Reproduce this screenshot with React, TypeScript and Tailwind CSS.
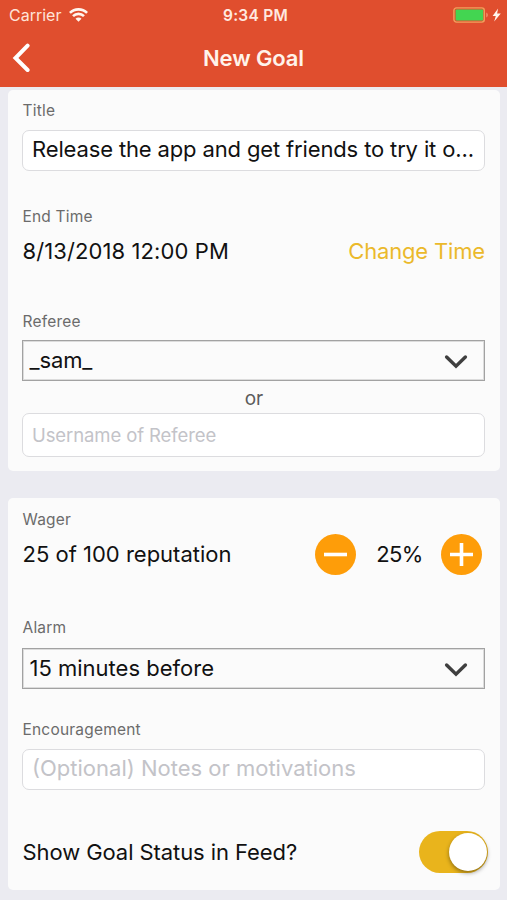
import { useState, type ReactNode } from "react"

const Label = ({ children }: { children: ReactNode }) => (
  <div className="h-5 pl-[0.5px] text-[15.5px] leading-5 tracking-[0.2px] text-[#6b6b6b]">{children}</div>
)

const Select = ({ children }: { children: ReactNode }) => (
  <button type="button" className="flex h-[41px] w-full items-center justify-between border border-[#a2a2a2] bg-[#fbfbfb] pl-[6.5px] pr-[16px] text-left shadow-[inset_0_0_0_1px_#dcdcdc]">
    {children}
    <svg className="mt-[2px]" width="24" height="16" viewBox="0 0 24 16" fill="none" stroke="#3f3f3f" strokeWidth="3.4" strokeLinecap="round">
      <path d="M2.6 3 12 12.2 21.4 3" />
    </svg>
  </button>
)

const WagerButton = ({ plus, onClick }: { plus?: boolean; onClick: () => void }) => (
  <button type="button" onClick={onClick} className="h-[41px] w-[41px]">
    <svg width="41" height="41" viewBox="0 0 41 41">
      <circle cx="20.5" cy="20.5" r="20.5" fill="#fe9d09" />
      <path d={plus ? "M9 20.5H32M20.5 9V32" : "M9 20.5H32"} stroke="#fff" strokeWidth="3.6" />
    </svg>
  </button>
)

const StatusBar = () => (
  <div className="flex h-[30px] items-center">
    <div className="flex w-[200px] items-center pl-[9px]">
      <span className="text-[16px] leading-5 text-[#ffe3d8]">Carrier</span>
      <svg className="ml-[8px]" width="19" height="14" viewBox="0 0 19 14" fill="none" stroke="#fff5ee" strokeWidth="2.6">
        <path d="M.9 4.9a12.2 12.2 0 0 1 17.2 0" />
        <path d="M4 8.1a7.8 7.8 0 0 1 11 0" />
        <path d="M9.5 13.7 6.5 10.7a4.2 4.2 0 0 1 6 0z" fill="#fff5ee" stroke="none" />
      </svg>
    </div>
    <span className="flex-1 pl-[4px] pt-px text-center text-[15.5px] font-semibold leading-5 tracking-[0.25px] text-[#ffe9e0]">9:34 PM</span>
    <div className="flex w-[200px] items-center justify-end pr-[6px]">
      <svg width="48" height="16" viewBox="0 0 48 16">
        <rect x=".9" y=".9" width="30.4" height="14.2" rx="2.5" fill="none" stroke="#f0a05c" strokeWidth="1.4" />
        <rect x="2.6" y="2.6" width="27.6" height="10.8" rx="1" fill="#43d551" />
        <path d="M33.3 5.5c2 1 2 4 0 5z" fill="#f09a70" />
        <path d="M45.1 1.4 39.6 9h3.2L41.2 14.4 47.8 6.6h-3.7z" fill="#fff5ee" />
      </svg>
    </div>
  </div>
)

export default function App() {
  const [wager, setWager] = useState(25)
  const [showInFeed, setShowInFeed] = useState(true)

  return (
    <div className="h-[900px] w-[507px] overflow-hidden bg-[#ebebf1] font-['Inter','Liberation_Sans',sans-serif] text-[22px] leading-7 text-[#111]">
      <header className="h-[87px] bg-[#e04e2e]">
        <StatusBar />
        <div className="flex h-[56px] items-center">
          <button type="button" className="w-[100px] pl-[12px]">
            <svg width="20" height="30" viewBox="0 0 20 30" fill="none" stroke="#fff" strokeWidth="4" strokeLinecap="round">
              <path d="M15.6 2.6 3.5 15 15.6 27" />
            </svg>
          </button>
          <h1 className="flex-1 text-center text-[22px] font-semibold tracking-[-0.1px] text-[#fff3ea]">New Goal</h1>
          <div className="w-[100px]" />
        </div>
      </header>

      <main className="flex flex-col gap-[27px] px-2 pt-[3px]">
        {/* Goal details */}
        <section className="h-[381px] w-[492px] rounded-[5px] bg-[#fbfbfb] pl-[14px] pr-[15px] pt-[11px]">
          <Label>Title</Label>
          <div className="mt-[9px] flex h-[41px] items-center rounded-[7px] border border-[#dcdcdf] bg-white px-[9px]">
            <span className="-mt-[3px] whitespace-nowrap tracking-[-0.14px]">Release the app and get friends to try it o...</span>
          </div>
          <div className="mt-[36px]">
            <Label>End Time</Label>
          </div>
          <div className="mt-[9px] flex items-center justify-between">
            <span className="pl-[0.5px] tracking-[0.1px]">8/13/2018 12:00 PM</span>
            <button type="button" className="pt-px tracking-[-0.17px] text-[#ebb92b]">Change Time</button>
          </div>
          <div className="mt-[47px]">
            <Label>Referee</Label>
          </div>
          <div className="mt-[8px]">
            <Select>
              <span className="-mt-[2px] tracking-[-0.1px]">_sam_</span>
            </Select>
          </div>
          <div className="h-[32px] pl-px text-center text-[19px] leading-[35px] text-[#5c5c5c]">or</div>
          <input
            placeholder="Username of Referee"
            className="block h-[44px] w-full rounded-[7px] border border-[#dcdcdf] bg-white px-[9px] pb-px text-[18.5px] tracking-[-0.1px] outline-none placeholder:text-[#c3c3c8]"
          />
        </section>

        {/* Wager and reminders */}
        <section className="h-[392px] w-[492px] rounded-[5px] bg-[#fbfbfb] pl-[14px] pr-[15px] pt-[12px]">
          <Label>Wager</Label>
          <div className="mt-[4px] flex h-[41px] items-center">
            <span className="flex-1 pb-[2px] pl-[0.5px]">{wager} of 100 reputation</span>
            <WagerButton onClick={() => setWager(Math.max(0, wager - 5))} />
            <span className="w-[85px] pb-[2px] pl-[2px] text-center tracking-[-0.6px]">{wager}%</span>
            <WagerButton plus onClick={() => setWager(Math.min(100, wager + 5))} />
            <div className="w-[3px]" />
          </div>
          <div className="mt-[43px]">
            <Label>Alarm</Label>
          </div>
          <div className="mt-[10px]">
            <Select>
              <span className="-mt-[2px]">15 minutes before</span>
            </Select>
          </div>
          <div className="mt-[31px]">
            <Label>Encouragement</Label>
          </div>
          <input
            placeholder="(Optional) Notes or motivations"
            className="mt-[9px] block h-[41px] w-full rounded-[7px] border border-[#dcdcdf] bg-white px-[9px] pb-[3px] outline-none placeholder:text-[#c3c3c8]"
          />
          <div className="-mr-[3px] mt-[41px] flex h-[42px] items-center justify-between">
            <span className="pl-[0.5px] tracking-[-0.08px]">Show Goal Status in Feed?</span>
            <button
              type="button"
              role="switch"
              aria-checked={showInFeed}
              onClick={() => setShowInFeed(!showInFeed)}
              className={`flex h-[42px] w-[69px] items-center rounded-full px-[1.5px] ${showInFeed ? "justify-end bg-[#e9b41c]" : "justify-start bg-gray-300"}`}
            >
              <span className="h-[38px] w-[38px] rounded-full bg-white shadow-[0_2px_4px_rgba(0,0,0,0.4)]" />
            </button>
          </div>
        </section>
      </main>
    </div>
  )
}
